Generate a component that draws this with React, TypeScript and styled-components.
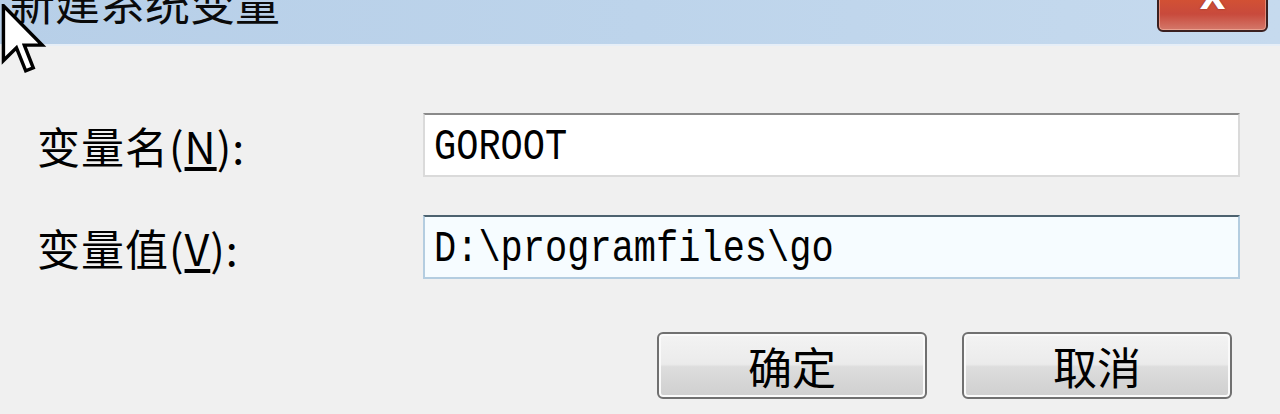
import React from "react";
import styled, { createGlobalStyle } from "styled-components";

const Global = createGlobalStyle`
  html, body { margin: 0; padding: 0; background: #f0f0f0; }
  * { box-sizing: border-box; }
`;

const Window = styled.div`
  position: relative;
  width: 1280px;
  height: 414px;
  overflow: hidden;
  display: flex;
  flex-direction: column;
  background: #f0f0f0;
  font-family: "Noto Sans CJK SC", "Noto Sans", sans-serif;
  color: #000;
`;

const TitleBar = styled.div`
  height: 46px;
  flex: none;
  display: flex;
  align-items: flex-start;
  background: linear-gradient(90deg, #b7cfe8 0%, #bdd4eb 50%, #c6daee 100%);
  border-bottom: 2px solid #e6eef7;
`;

const Title = styled.div`
  margin-top: -21px;
  margin-left: 10px;
  font-size: 45px;
  line-height: 1;
  color: #0a0a0a;
`;

const CloseButton = styled.div`
  margin-left: auto;
  margin-right: 12px;
  margin-top: -12px;
  width: 111px;
  height: 44px;
  border: 2px solid #3a2020;
  border-radius: 0 0 6px 6px;
  background: linear-gradient(180deg, #d9552f 0%, #c84a3c 60%, #d4786a 100%);
  box-shadow: inset 0 0 0 1px rgba(255, 200, 180, 0.5);
  display: flex;
  justify-content: center;
  align-items: flex-start;
  color: #fff;
  font-family: "DejaVu Sans", sans-serif;
  font-weight: bold;
  font-size: 34px;
  line-height: 1;
`;

const XMark = styled.span`
  margin-top: -10px;
  text-shadow: 0 0 2px #7a2a20;
`;

const Body = styled.div`
  flex: 1;
  display: flex;
  flex-direction: column;
  padding: 67px 40px 0 37px;
`;

const Form = styled.div`
  display: grid;
  grid-template-columns: 386px 817px;
  row-gap: 38px;
  align-items: center;
`;

const Label = styled.div`
  font-size: 43px;
  line-height: 1;
  letter-spacing: 1px;
  white-space: nowrap;
`;

const Key = styled.span`
  text-decoration: underline;
  text-underline-offset: 3px;
`;

const Field = styled.div<{ $focused?: boolean }>`
  height: 64px;
  display: flex;
  align-items: center;
  padding-left: 9px;
  padding-top: 4px;
  background: ${(p) => (p.$focused ? "#f6fcff" : "#ffffff")};
  border: 2px solid ${(p) => (p.$focused ? "#b4cde0" : "#dadada")};
  border-top-color: ${(p) => (p.$focused ? "#4d626f" : "#8a8a8a")};
  font-family: "Liberation Mono", "DejaVu Sans Mono", monospace;
  font-size: 37px;
  line-height: 1;
  white-space: nowrap;
`;

const FieldText = styled.span`
  display: inline-block;
  transform: scaleY(1.22);
  transform-origin: center;
`;

const ButtonRow = styled.div`
  margin-top: 53px;
  display: flex;
  justify-content: flex-end;
  gap: 35px;
  padding-right: 8px;
`;

const Button = styled.div`
  width: 270px;
  height: 67px;
  border: 2px solid #707070;
  border-radius: 6px;
  background: linear-gradient(180deg, #f3f3f3 0%, #ebebeb 48%, #dddddd 52%, #cfcfcf 100%);
  box-shadow: inset 0 0 0 2px #fafafa;
  display: flex;
  justify-content: center;
  align-items: center;
  font-size: 44px;
  line-height: 1;
`;

const Cursor = styled.svg`
  position: absolute;
  left: -1px;
  top: 4px;
`;

export default function App() {
  return (
    <>
      <Global />
      <Window>
        <TitleBar>
          <Title>新建系统变量</Title>
          <CloseButton>
            <XMark>X</XMark>
          </CloseButton>
        </TitleBar>
        <Body>
          <Form>
            <Label>
              变量名(<Key>N</Key>):
            </Label>
            <Field>
              <FieldText>GOROOT</FieldText>
            </Field>
            <Label>
              变量值(<Key>V</Key>):
            </Label>
            <Field $focused>
              <FieldText>D:\programfiles\go</FieldText>
            </Field>
          </Form>
          <ButtonRow>
            <Button>确定</Button>
            <Button>取消</Button>
          </ButtonRow>
        </Body>
        <Cursor width="50" height="72" viewBox="0 0 13 21">
          <path
            d="M0.5 0.5 L0.5 16.5 L4.3 12.8 L7 19.5 L9.2 18.6 L6.6 12 L11.8 12 Z"
            fill="#fff"
            stroke="#000"
            strokeWidth="1"
            strokeLinejoin="miter"
          />
        </Cursor>
      </Window>
    </>
  );
}
